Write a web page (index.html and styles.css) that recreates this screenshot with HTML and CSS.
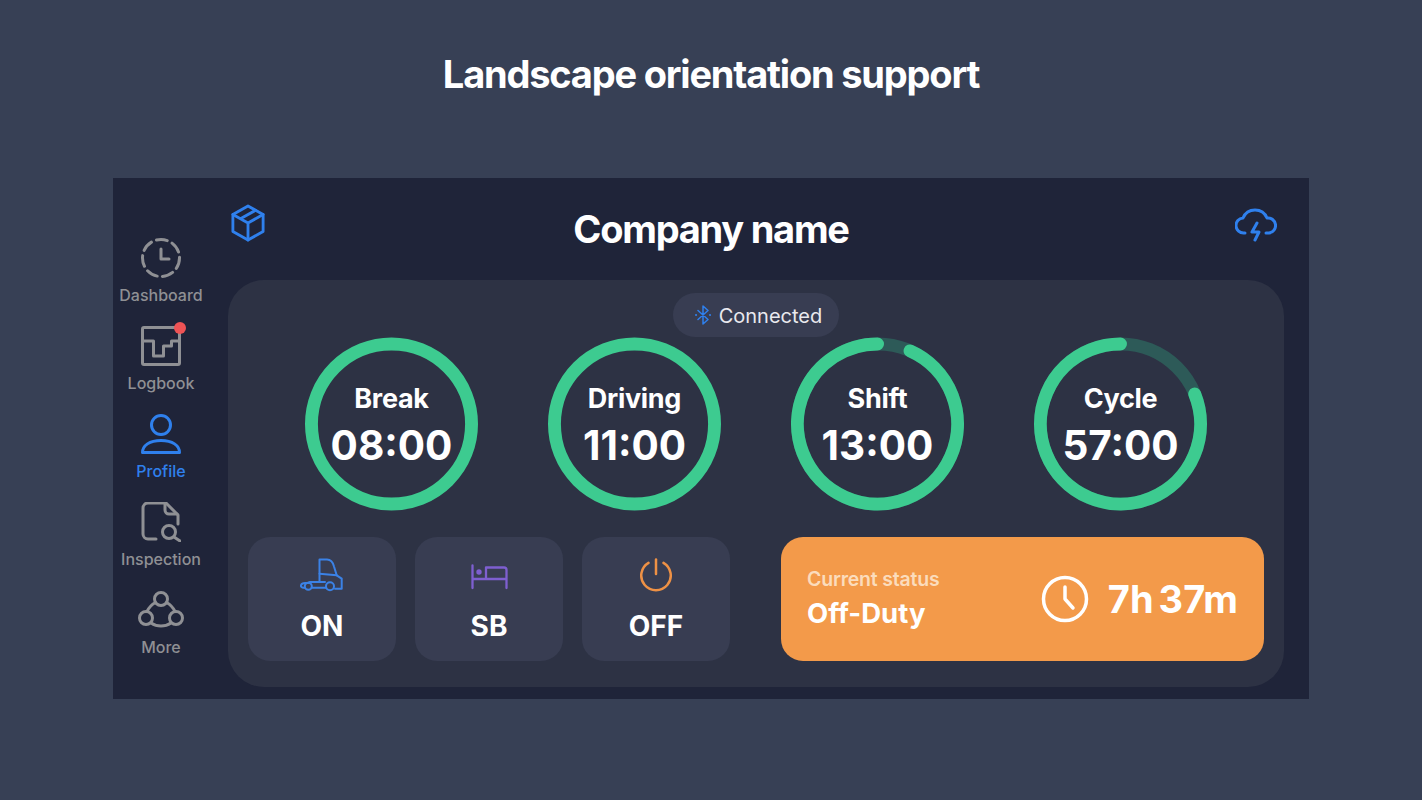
FILE: index.html
```html
<!DOCTYPE html>
<html lang="en">
<head>
    <meta charset="UTF-8">
    <meta name="viewport" content="width=device-width, initial-scale=1.0">
    <title>Landscape orientation support</title>
    <link rel="stylesheet" href="styles.css">
</head>
<body>
    <h1 class="page-title">Landscape orientation support</h1>
    <div class="frame">
        <nav class="sidebar">
            <div class="nav-item">
                <svg class="nav-icon" viewBox="0 0 40 40" fill="none" stroke="currentColor" stroke-width="3" stroke-linecap="round" stroke-linejoin="round">
                    <circle cx="20" cy="20" r="18.5" stroke-dasharray="11 5.4"/>
                    <path d="M20 11v10h8"/>
                </svg>
                <span>Dashboard</span>
            </div>
            <div class="nav-item">
                <div class="badge-wrap">
                    <svg class="nav-icon" viewBox="0 0 40 40" fill="none" stroke="currentColor" stroke-width="3" stroke-linejoin="round">
                        <rect x="1.5" y="1.5" width="37" height="37" rx="1.5"/>
                        <path d="M1.5 15h11v15h10v-10h8v-5h8"/>
                    </svg>
                    <span class="badge"></span>
                </div>
                <span>Logbook</span>
            </div>
            <div class="nav-item active">
                <svg class="nav-icon" viewBox="0 0 40 40" fill="none" stroke="currentColor" stroke-width="3" stroke-linecap="round" stroke-linejoin="round">
                    <circle cx="20" cy="11" r="9.5"/>
                    <path d="M1.5 38.5c0-7 7-12 18.500-12s18.500 5 18.500 12z"/>
                </svg>
                <span>Profile</span>
            </div>
            <div class="nav-item">
                <svg class="nav-icon" viewBox="0 0 40 40" fill="none" stroke="currentColor" stroke-width="3" stroke-linecap="round" stroke-linejoin="round">
                    <path d="M15 37H7a5 5 0 0 1-5-5V6a5 5 0 0 1 5-5h18l12 12v9"/>
                    <path d="M24 2v6a4 4 0 0 0 4 4h8"/>
                    <circle cx="28" cy="30" r="6.500"/>
                    <path d="M33 35l6 4"/>
                </svg>
                <span>Inspection</span>
            </div>
            <div class="nav-item">
                <svg class="nav-icon" viewBox="0 0 46 40" fill="none" stroke="currentColor" stroke-width="3" stroke-linecap="round" stroke-linejoin="round">
                    <circle cx="23" cy="9" r="6.500"/>
                    <circle cx="8" cy="28" r="6.500"/>
                    <circle cx="38" cy="28" r="6.500"/>
                    <path d="M17.500 12.500A20 20 0 0 0 9 21.500M28.500 12.500A20 20 0 0 1 37 21.500M13 33a18 18 0 0 0 20 0"/>
                </svg>
                <span>More</span>
            </div>
        </nav>

        <header class="top-bar">
            <svg class="cube-icon" viewBox="0 0 36 40" fill="none" stroke="currentColor" stroke-width="3" stroke-linejoin="round" stroke-linecap="round">
                <path d="M18 2l16 9v18l-16 9-16-9V11z"/>
                <path d="M2 11l16 9 16-9M18 20v18M10 15.500l16-9"/>
            </svg>
            <div class="company">Company name</div>
            <svg class="cloud-icon" viewBox="0 0 42 34" fill="none" stroke="currentColor" stroke-width="3" stroke-linecap="round" stroke-linejoin="round">
                <path d="M10 25H9a7.500 7.500 0 0 1-1-15A13 13 0 0 1 32 10a7.500 7.500 0 0 1 2 15h-3"/>
                <path d="M22 15l-5 9h7l-4 8"/>
            </svg>
        </header>

        <main class="card">
            <div class="pill">
                <svg class="bt-icon" viewBox="0 0 16 20" fill="none" stroke="currentColor" stroke-width="1.500" stroke-linecap="round" stroke-linejoin="round">
                    <path d="M3 5.500l10 9-5 4.500V1l5 4.500-10 9"/>
                    <path d="M1 10h.1M15 10h.1" stroke-width="2"/>
                </svg>
                <span>Connected</span>
            </div>

            <div class="gauges">
                <div class="gauge">
                    <svg viewBox="0 0 174 174">
                        <circle class="ring-track" cx="87" cy="87" r="80.500"/>
                    </svg>
                    <div class="gauge-text"><span class="gauge-label">Break</span><span class="gauge-value">08:00</span></div>
                </div>
                <div class="gauge">
                    <svg viewBox="0 0 174 174">
                        <circle class="ring-track" cx="87" cy="87" r="80.500"/>
                    </svg>
                    <div class="gauge-text"><span class="gauge-label">Driving</span><span class="gauge-value">11:00</span></div>
                </div>
                <div class="gauge">
                    <svg viewBox="0 0 174 174">
                        <circle class="ring-bg" cx="87" cy="87" r="80.500"/>
                        <circle class="ring-arc" cx="87" cy="87" r="80.500" pathLength="360" stroke-dasharray="336 360" transform="rotate(-66 87 87)"/>
                    </svg>
                    <div class="gauge-text"><span class="gauge-label">Shift</span><span class="gauge-value">13:00</span></div>
                </div>
                <div class="gauge">
                    <svg viewBox="0 0 174 174">
                        <circle class="ring-bg" cx="87" cy="87" r="80.500"/>
                        <circle class="ring-arc" cx="87" cy="87" r="80.500" pathLength="360" stroke-dasharray="292 360" transform="rotate(-22 87 87)"/>
                    </svg>
                    <div class="gauge-text"><span class="gauge-label">Cycle</span><span class="gauge-value">57:00</span></div>
                </div>
            </div>

            <div class="bottom-row">
                <div class="duty-btn">
                    <svg class="duty-icon" viewBox="0 0 44 34" fill="none" stroke="#3b82e6" stroke-width="2" stroke-linecap="round" stroke-linejoin="round">
                        <path d="M19.500 24V1.500H27c4 0 6 3 7 7l2.700 8.800 5 3.400v10H35"/>
                        <path d="M19.500 15.700l17.200 1.600"/>
                        <circle cx="8.300" cy="28.300" r="3.500"/>
                        <circle cx="30" cy="28.300" r="4"/>
                        <path d="M4.800 29.700H3a2 2 0 0 1-2-2.500c.5-1.500 2-2.200 4-2.200h3l2-1h15M11.700 29.700H26"/>
                    </svg>
                    <span>ON</span>
                </div>
                <div class="duty-btn">
                    <svg class="duty-icon" viewBox="0 -6 37 34" fill="none" stroke="#7e5fd0" stroke-width="2.300" stroke-linecap="round" stroke-linejoin="round">
                        <path d="M1.500 1.500V24M1.500 15h34M35.500 24V6a2.500 2.500 0 0 0-2.500-2.500H15V15"/>
                        <circle cx="8" cy="8" r="2.700" fill="#7e5fd0" stroke="none"/>
                    </svg>
                    <span>SB</span>
                </div>
                <div class="duty-btn">
                    <svg class="duty-icon" viewBox="0 0 34 34" fill="none" stroke="#ee9145" stroke-width="2.500" stroke-linecap="round">
                        <path d="M17 1.500V16"/>
                        <path d="M9.500 4.800a14.750 14.750 0 1 0 15 0"/>
                    </svg>
                    <span>OFF</span>
                </div>

                <div class="status">
                    <div class="status-left">
                        <span class="status-label">Current status</span>
                        <span class="status-name">Off-Duty</span>
                    </div>
                    <div class="status-right">
                        <svg class="status-clock" viewBox="0 0 48 48" fill="none" stroke="#fff" stroke-width="3.500" stroke-linecap="round" stroke-linejoin="round">
                            <circle cx="24" cy="24" r="21.500"/>
                            <path d="M24 12v12l8 9"/>
                        </svg>
                        <span class="status-time">7h 37m</span>
                    </div>
                </div>
            </div>
        </main>
    </div>
</body>
</html>
```

FILE: styles.css
```css
* {
    box-sizing: border-box;
}

body {
    margin: 0;
    height: 800px;
    overflow: hidden;
    background-color: #374055;
    font-family: Inter, "Liberation Sans", sans-serif;
    color: #ffffff;
}

.page-title {
    margin: 0;
    height: 178px;
    padding-top: 50px;
    text-align: center;
    font-size: 38px;
    line-height: 48px;
    font-weight: 700;
    letter-spacing: -1.2px;
}

.frame {
    width: 1196px;
    height: 521px;
    margin: 0 auto;
    background-color: #1f2439;
    display: grid;
    grid-template-columns: 115px 1fr;
    grid-template-rows: 102px 1fr;
}

.sidebar {
    grid-column: 1;
    grid-row: 1 / 3;
    width: 96px;
    padding-top: 60px;
    display: flex;
    flex-direction: column;
    z-index: 1;
}

.nav-item {
    height: 88px;
    display: flex;
    flex-direction: column;
    align-items: center;
    gap: 7px;
    font-size: 16px;
    line-height: 20px;
    font-weight: 500;
    color: #8f9094;
}

.nav-item.active {
    color: #2f80ed;
}

.nav-icon {
    height: 40px;
    display: block;
}

.badge-wrap {
    position: relative;
}

.badge {
    position: absolute;
    top: -4px;
    right: -5px;
    width: 12px;
    height: 12px;
    border-radius: 50%;
    background-color: #ee5355;
}

.top-bar {
    grid-column: 1 / 3;
    grid-row: 1;
    display: grid;
    grid-template-columns: 1fr auto 1fr;
    align-items: start;
    padding: 0 32px;
}

.cube-icon {
    width: 34px;
    height: 38px;
    margin: 26px 0 0 86px;
    color: #2f80ed;
}

.company {
    font-size: 38px;
    line-height: 48px;
    margin-top: 27px;
    font-weight: 700;
    letter-spacing: -1.25px;
}

.cloud-icon {
    width: 42px;
    height: 34px;
    margin-top: 30px;
    justify-self: end;
    color: #2f80ed;
}

.card {
    grid-column: 2;
    grid-row: 2;
    width: 1056px;
    height: 407px;
    padding: 13px 20px 26px;
    background-color: #2d3244;
    border-radius: 36px;
    display: flex;
    flex-direction: column;
    align-items: center;
}

.pill {
    width: 166px;
    height: 44px;
    padding: 2px 0 0 5px;
    border-radius: 22px;
    background-color: #383d52;
    display: flex;
    align-items: center;
    justify-content: center;
    gap: 8px;
    font-size: 20px;
    color: #e9e9ee;
}

.bt-icon {
    width: 16px;
    height: 20px;
    margin-top: -3px;
    color: #2f80ed;
}

.gauges {
    width: 100%;
    display: flex;
    justify-content: center;
    gap: 70px;
}

.gauge {
    width: 173px;
    height: 174px;
    display: grid;
}

.gauge > * {
    grid-area: 1 / 1;
}

.gauge svg {
    width: 173px;
    height: 174px;
}

.ring-track,
.ring-arc,
.ring-bg {
    fill: none;
    stroke-width: 13;
}

.ring-track,
.ring-arc {
    stroke: #3dcb90;
}

.ring-arc {
    stroke-linecap: round;
}

.ring-bg {
    stroke: #2d5a58;
}

.gauge-text {
    display: flex;
    flex-direction: column;
    align-items: center;
    padding-top: 44px;
}

.gauge-label {
    font-size: 27px;
    line-height: 36px;
    font-weight: 700;
    letter-spacing: -0.3px;
}

.gauge-value {
    font-size: 40.5px;
    line-height: 52px;
    margin-top: 3px;
    font-weight: 700;
}

.bottom-row {
    width: 100%;
    margin-top: 26px;
    display: flex;
    gap: 19px;
}

.duty-btn {
    width: 148px;
    height: 124px;
    border-radius: 22px;
    background-color: #383d52;
    display: flex;
    flex-direction: column;
    align-items: center;
    font-size: 28px;
    line-height: 34px;
    font-weight: 700;
}

.duty-icon {
    height: 34px;
    margin-top: 21px;
    margin-bottom: 17px;
}

.status {
    width: 483px;
    height: 124px;
    margin-left: 32px;
    padding: 0 26px;
    border-radius: 22px;
    background-color: #f39a4a;
    display: flex;
    align-items: center;
    justify-content: space-between;
}

.status-left {
    display: flex;
    flex-direction: column;
}

.status-label {
    font-size: 19.5px;
    line-height: 24px;
    font-weight: 600;
    letter-spacing: -0.2px;
    color: #fbdcbc;
}

.status-name {
    font-size: 27.5px;
    line-height: 36px;
    margin-top: 4px;
    font-weight: 700;
}

.status-right {
    display: flex;
    align-items: center;
    gap: 19px;
}

.status-clock {
    width: 48px;
    height: 48px;
}

.status-time {
    font-size: 38px;
    font-weight: 700;
    line-height: 44px;
    word-spacing: -4px;
}
```
